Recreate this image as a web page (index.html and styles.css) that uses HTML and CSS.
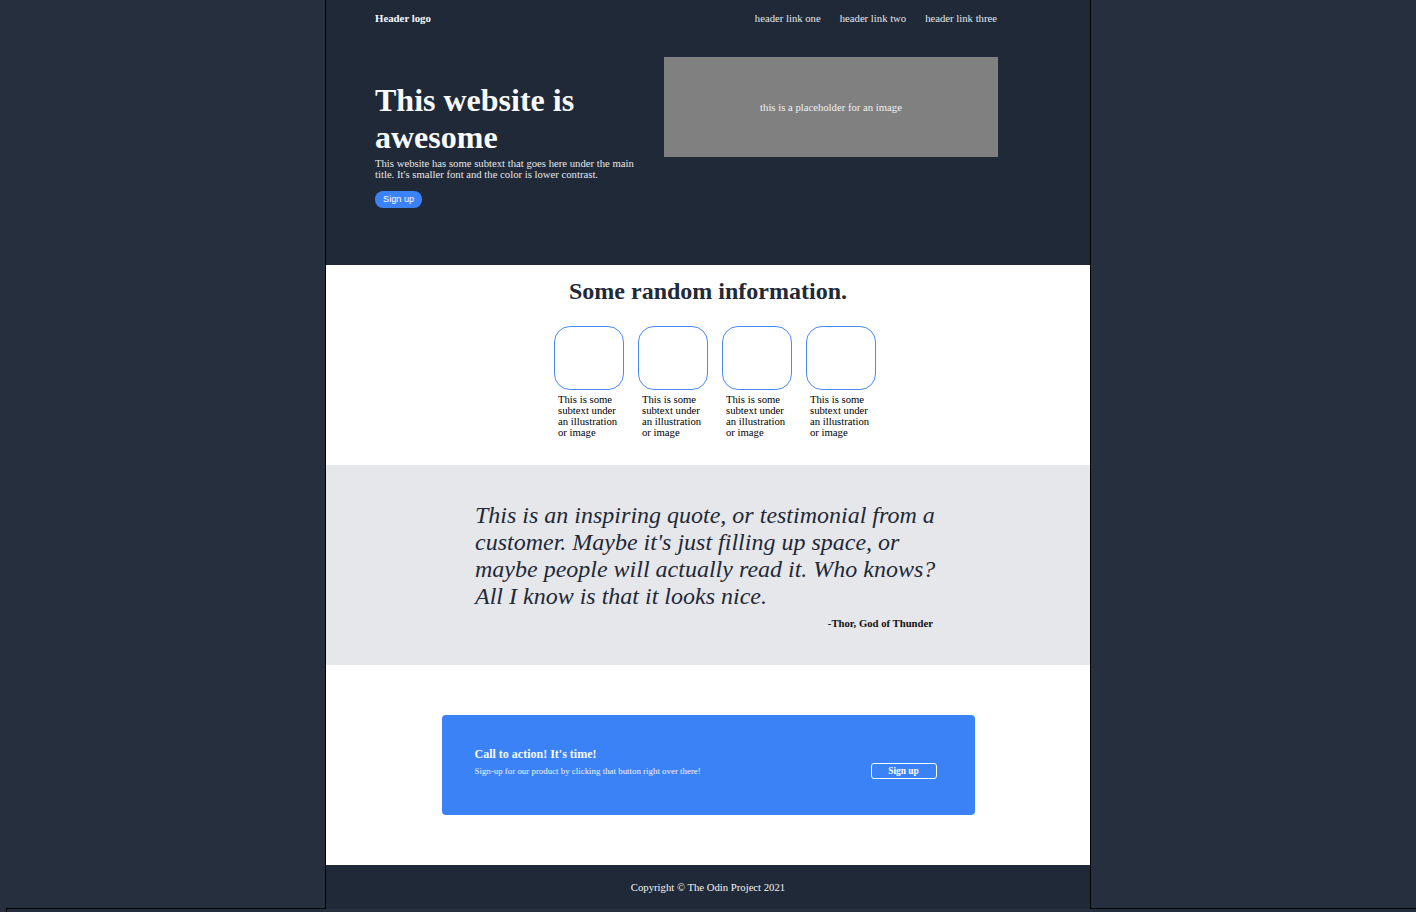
FILE: index.html
```html
<!DOCTYPE html>
<html lang="en">
<head>
<meta charset="utf-8">
<title>This website is awesome</title>
<link rel="stylesheet" href="styles.css">
</head>
<body>
<div class="page">
  <section class="top">
    <header class="header">
      <div class="logo">Header logo</div>
      <nav class="links">
        <a href="#">header link one</a>
        <a href="#">header link two</a>
        <a href="#">header link three</a>
      </nav>
    </header>
    <div class="hero">
      <div class="hero-text">
        <h1>This website is awesome</h1>
        <p class="hero-sub">This website has some subtext that goes here under the main title. It's smaller font and the color is lower contrast.</p>
        <button class="btn-primary">Sign up</button>
      </div>
      <div class="hero-image">this is a placeholder for an image</div>
    </div>
  </section>

  <section class="info">
    <h2>Some random information.</h2>
    <div class="cards">
      <div class="card"><div class="card-box"></div><p class="card-text">This is some subtext under an illustration or image</p></div>
      <div class="card"><div class="card-box"></div><p class="card-text">This is some subtext under an illustration or image</p></div>
      <div class="card"><div class="card-box"></div><p class="card-text">This is some subtext under an illustration or image</p></div>
      <div class="card"><div class="card-box"></div><p class="card-text">This is some subtext under an illustration or image</p></div>
    </div>
  </section>

  <section class="quote">
    <div class="quote-inner">
      <p class="quote-text">This is an inspiring quote, or testimonial from a customer. Maybe it's just filling up space, or maybe people will actually read it. Who knows? All I know is that it looks nice.</p>
      <p class="quote-author">-Thor, God of Thunder</p>
    </div>
  </section>

  <section class="cta-section">
    <div class="cta">
      <div class="cta-text">
        <h3>Call to action! It's time!</h3>
        <p>Sign-up for our product by clicking that button right over there!</p>
      </div>
      <button class="btn-outline">Sign up</button>
    </div>
  </section>

  <footer class="footer">Copyright © The Odin Project 2021</footer>
</div>
<div class="below"></div>
</body>
</html>
```

FILE: styles.css
```css
* { box-sizing: border-box; }

html, body {
  margin: 0;
  padding: 0;
  background: #262f3e;
}

body {
  font-family: "Liberation Serif", "Times New Roman", serif;
  font-size: 10.7px;
}

.page {
  position: relative;
  z-index: 1;
  width: 766px;
  margin: 0 auto;
  border-left: 1px solid #000;
  border-right: 1px solid #000;
}

.top {
  background: #1f2937;
  padding: 12px 92px 57px 49px;
}

.header {
  display: flex;
  justify-content: space-between;
  align-items: center;
  line-height: 12px;
  height: 12px;
}

.logo {
  color: #f9fafb;
  font-weight: bold;
  font-size: 10.8px;
}

.links {
  display: flex;
  gap: 19px;
  margin-right: 1px;
}

.links a {
  color: #e5e7eb;
  text-decoration: none;
  font-size: 10.7px;
}

.hero {
  display: flex;
  align-items: flex-start;
  margin-top: 33px;
}

.hero-text {
  width: 265px;
  margin-top: 25px;
  margin-right: 24px;
}

.hero-text h1 {
  margin: 0 0 2px;
  color: #f9fafb;
  font-size: 32px;
  line-height: 37px;
  font-weight: bold;
}

.hero-sub {
  margin: 0;
  color: #e5e7eb;
  font-size: 10.7px;
  line-height: 11px;
}

.btn-primary {
  margin-top: 11px;
  height: 17px;
  padding: 0 8px;
  border: none;
  border-radius: 8px;
  background: #3b82f6;
  color: #fff;
  font-family: "Liberation Sans", Arial, sans-serif;
  font-size: 9.2px;
  line-height: 17px;
}

.hero-image {
  width: 334px;
  height: 100px;
  background: #808080;
  color: #eef0f3;
  display: flex;
  align-items: center;
  justify-content: center;
  font-size: 10.7px;
}

.info {
  background: #fff;
  padding: 13px 0 27px;
  height: 200px;
}

.info h2 {
  margin: 0;
  text-align: center;
  color: #1f2937;
  font-size: 24px;
  line-height: 26px;
  font-weight: bold;
}

.cards {
  display: flex;
  justify-content: center;
  gap: 14px;
  margin-top: 22px;
  padding-left: 14px;
}

.card {
  width: 70px;
}

.card-box {
  width: 70px;
  height: 64px;
  border: 1.5px solid #4a8af6;
  border-radius: 16px;
}

.card-text {
  margin: 4px 0 0;
  padding-left: 4px;
  color: #000;
  font-size: 10.7px;
  line-height: 11px;
}

.quote {
  background: #e5e7eb;
  height: 200px;
  padding: 37px 0 36px;
}

.quote-inner {
  width: 470px;
  margin-left: 149px;
}

.quote-text {
  margin: 0;
  font-style: italic;
  font-size: 24px;
  line-height: 27px;
  color: #1f2937;
}

.quote-author {
  margin: 7px 12px 0 0;
  text-align: right;
  font-weight: bold;
  font-size: 10.7px;
  line-height: 12px;
  color: #111;
}

.cta-section {
  background: #fff;
  padding: 50px 0;
}

.cta {
  width: 533px;
  height: 100px;
  margin: 0 auto;
  background: #3b82f6;
  border-radius: 4px;
  padding: 32px 38px 0 33px;
  display: flex;
  justify-content: space-between;
  align-items: flex-start;
}

.cta-text h3 {
  margin: 0;
  color: #f9fafb;
  font-size: 12px;
  line-height: 14px;
  font-weight: bold;
}

.cta-text p {
  margin: 3px 0 0;
  color: #f3f4f6;
  font-size: 8.9px;
  line-height: 14px;
}

.btn-outline {
  margin-top: 16px;
  width: 66px;
  height: 16px;
  border: 1px solid #fff;
  border-radius: 3px;
  background: transparent;
  color: #fff;
  font-family: "Liberation Serif", "Times New Roman", serif;
  font-weight: bold;
  font-size: 9.4px;
  line-height: 14px;
  padding: 0;
}

.footer {
  background: #1f2937;
  color: #f3f4f6;
  text-align: center;
  font-size: 10.7px;
  line-height: 12px;
  padding: 16px 0;
  height: 44px;
}

.below {
  margin-top: -1px;
  margin-left: 6px;
  height: 40px;
  border-top: 1px solid #000;
  border-left: 1px solid #000;
}
```
